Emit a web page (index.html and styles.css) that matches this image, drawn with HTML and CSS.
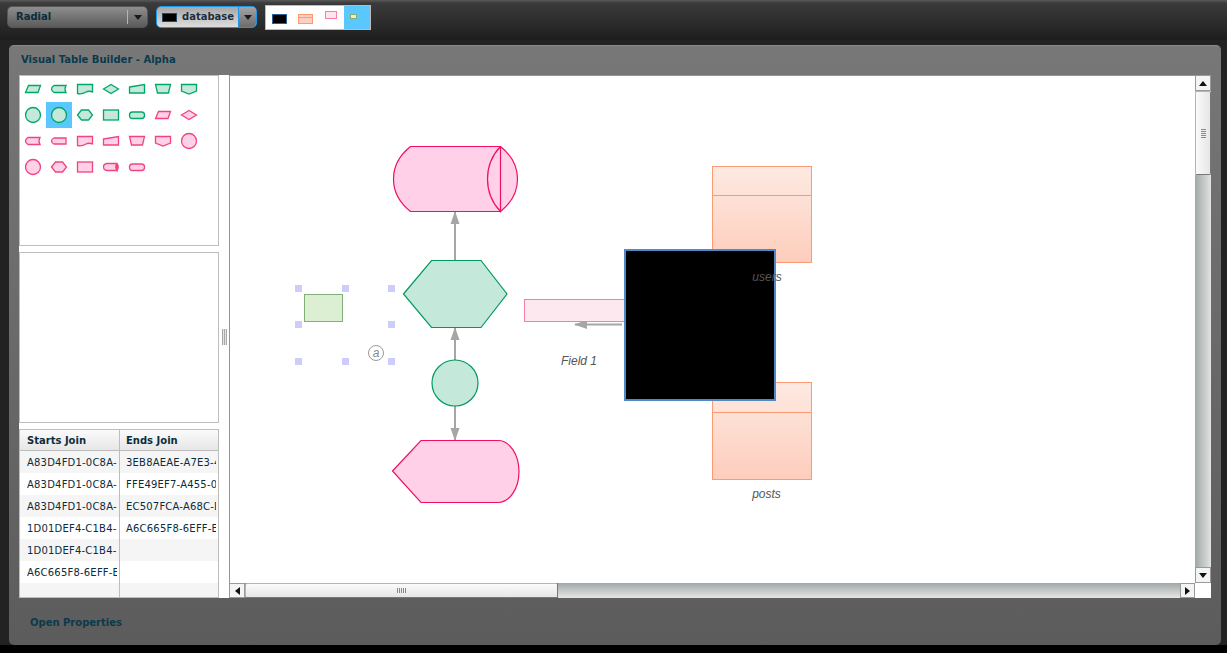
FILE: index.html
```html
<!DOCTYPE html>
<html lang="en">
<head>
<meta charset="utf-8">
<title>Visual Table Builder - Alpha</title>
<link rel="stylesheet" href="styles.css">
</head>
<body>
<svg class="sprite" aria-hidden="true">
  <defs>
    <path id="i-para" d="M8.5,9.500H20.500L18,16.500H5.500Z"/>
    <path id="i-card" d="M8,9.500H20Q18,13 20,16.500H8Q5.500,15 5.500,13Q5.500,11 8,9.500Z"/>
    <path id="i-doc" d="M5.500,8.500H20.500V16Q17,14.500 14,16Q10,18.500 5.500,17.500Z"/>
    <path id="i-diamond" d="M5.500,13L13,8.500L20.500,13L13,17.500Z"/>
    <path id="i-input" d="M5.500,11L20.500,8.500V17H5.500Z"/>
    <path id="i-trap" d="M5.500,8.500H20.500L18.500,17H7.500Z"/>
    <path id="i-off" d="M5.500,8.500H20.500V15L13,18L5.500,15Z"/>
    <circle id="i-circle" cx="13" cy="13" r="7.500"/>
    <path id="i-hex" d="M5.500,13L9.500,8H16.500L20.500,13L16.500,18H9.500Z"/>
    <rect id="i-rect" x="5.500" y="8" width="15" height="10"/>
    <rect id="i-pill" x="5.500" y="10" width="15" height="6.500" rx="3"/>
    <path id="i-tag" d="M8,10H20V16H8Q5.500,15 5.500,13Q5.500,11 8,10Z"/>
    <path id="i-cyl" d="M9,9.500H19Q21.500,13 19,16.500H9Q5.500,16 5.500,13Q5.500,10 9,9.500ZM19,9.500Q16.500,13 19,16.500V9.500"/>
  </defs>
</svg>

<header class="topbar">
  <div class="combo combo-plain">
    <span class="combo-label">Radial</span>
    <span class="combo-btn"><i class="caret"></i></span>
  </div>
  <div class="combo combo-active">
    <span class="combo-swatch"></span>
    <span class="combo-label">database</span>
    <span class="combo-btn"><i class="caret"></i></span>
  </div>
  <svg class="strip" width="106" height="25" viewBox="0 0 106 25">
    <rect width="106" height="25" fill="#fff"/>
    <rect x="79" width="27" height="25" fill="#5ac8ff"/>
    <rect x="7.500" y="9.500" width="14" height="9" fill="#000" stroke="#2c5f92"/>
    <rect x="33.500" y="9.500" width="14" height="9" fill="#ffd0bf" stroke="#fd9a74"/>
    <path d="M33.500,12.500H47.500" stroke="#fd9a74" fill="none"/>
    <rect x="60.500" y="6.500" width="11" height="7" fill="#ffe3ef" stroke="#f580a5"/>
    <rect x="85.500" y="9.500" width="6" height="4" fill="#e8f0c8" stroke="#82ae78"/>
  </svg>
</header>

<main class="panel">
  <h1 class="panel-title">Visual Table Builder - Alpha</h1>
  <div class="workspace">
    <aside class="sidebar">
      <div class="box palette">
        <svg class="ico green"><use href="#i-para"/></svg>
        <svg class="ico green"><use href="#i-card"/></svg>
        <svg class="ico green"><use href="#i-doc"/></svg>
        <svg class="ico green"><use href="#i-diamond"/></svg>
        <svg class="ico green"><use href="#i-input"/></svg>
        <svg class="ico green"><use href="#i-trap"/></svg>
        <svg class="ico green"><use href="#i-off"/></svg>

        <svg class="ico green"><use href="#i-circle"/></svg>
        <svg class="ico green selected"><use href="#i-circle"/></svg>
        <svg class="ico green"><use href="#i-hex"/></svg>
        <svg class="ico green"><use href="#i-rect"/></svg>
        <svg class="ico green"><use href="#i-pill"/></svg>
        <svg class="ico pink"><use href="#i-para"/></svg>
        <svg class="ico pink"><use href="#i-diamond"/></svg>

        <svg class="ico pink"><use href="#i-card"/></svg>
        <svg class="ico pink"><use href="#i-tag"/></svg>
        <svg class="ico pink"><use href="#i-doc"/></svg>
        <svg class="ico pink"><use href="#i-input"/></svg>
        <svg class="ico pink"><use href="#i-trap"/></svg>
        <svg class="ico pink"><use href="#i-off"/></svg>
        <svg class="ico pink"><use href="#i-circle"/></svg>

        <svg class="ico pink"><use href="#i-circle"/></svg>
        <svg class="ico pink"><use href="#i-hex"/></svg>
        <svg class="ico pink"><use href="#i-rect"/></svg>
        <svg class="ico pink"><use href="#i-cyl"/></svg>
        <svg class="ico pink"><use href="#i-pill"/></svg>
      </div>
      <div class="box blank"></div>
      <table class="joins">
        <thead>
          <tr><th>Starts Join</th><th>Ends Join</th></tr>
        </thead>
        <tbody>
          <tr><td><div>A83D4FD1-0C8A-4B12-9</div></td><td><div>3EB8AEAE-A7E3-4C19-A</div></td></tr>
          <tr><td><div>A83D4FD1-0C8A-4B12-9</div></td><td><div>FFE49EF7-A455-0D21-8</div></td></tr>
          <tr><td><div>A83D4FD1-0C8A-4B12-9</div></td><td><div>EC507FCA-A68C-D102-4</div></td></tr>
          <tr><td><div>1D01DEF4-C1B4-3A17-5</div></td><td><div>A6C665F8-6EFF-E201-7</div></td></tr>
          <tr><td><div>1D01DEF4-C1B4-3A17-5</div></td><td><div></div></td></tr>
          <tr><td><div>A6C665F8-6EFF-E201-7</div></td><td><div></div></td></tr>
          <tr class="filler"><td><div></div></td><td><div></div></td></tr>
        </tbody>
      </table>
    </aside>

    <div class="splitter"><i></i></div>

    <section class="stage">
      <div class="canvas">
        <svg class="diagram" width="965" height="507" viewBox="230 76 965 507">
          <defs>
            <linearGradient id="orange" x1="0" y1="0" x2="0" y2="1">
              <stop offset="0" stop-color="#fdeae2"/>
              <stop offset="1" stop-color="#fdcdbc"/>
            </linearGradient>
            <marker id="head" markerWidth="14" markerHeight="10" refX="12" refY="5" orient="auto" markerUnits="userSpaceOnUse">
              <path d="M0,0.500L13,5L0,9.500Z" fill="#a6a6a6"/>
            </marker>
          </defs>

          <g class="link">
            <path d="M455,260V212" marker-end="url(#head)"/>
            <path d="M455,360V328" marker-end="url(#head)"/>
            <path d="M455,406V440" marker-end="url(#head)"/>
            <path d="M622,324.500H575" marker-end="url(#head)"/>
          </g>

          <path class="pinkshape" d="M410.500,146.500H500.500Q517.500,160 517.500,179Q517.500,198 500.500,211.500H410.500Q393.500,198 393.500,179Q393.500,160 410.500,146.500Z"/>
          <path class="pinkshape nofill" d="M500.500,146.500Q487.500,160 487.500,179Q487.500,198 500.500,211.500V146.500"/>
          <path class="greenshape" d="M403.500,294L431.500,260.500H481L507,294L481,327.500H431.500Z"/>
          <circle class="greenshape" cx="455" cy="383" r="23"/>
          <path class="pinkshape" d="M392.500,471L421,440.500H498A21,31 0 0 1 498,502.500H421Z"/>

          <rect class="selrect" x="304.500" y="294.500" width="38" height="27"/>
          <g class="handles">
            <rect x="295" y="285" width="7" height="7"/>
            <rect x="342" y="285" width="7" height="7"/>
            <rect x="388" y="285" width="7" height="7"/>
            <rect x="295" y="321" width="7" height="7"/>
            <rect x="388" y="321" width="7" height="7"/>
            <rect x="295" y="358" width="7" height="7"/>
            <rect x="342" y="358" width="7" height="7"/>
            <rect x="388" y="358" width="7" height="7"/>
          </g>
          <circle class="atring" cx="376" cy="353" r="7.500"/>
          <text class="at" x="376" y="356.500">a</text>

          <rect class="field" x="524.500" y="299.500" width="101" height="22"/>
          <text class="label" x="579" y="365">Field 1</text>

          <rect class="tbl" x="712.500" y="166.500" width="99" height="96"/>
          <path class="tblline" d="M712,195.500H812"/>
          <rect class="tbl" x="712.500" y="382.500" width="99" height="97"/>
          <path class="tblline" d="M712,412.500H812"/>

          <rect class="blackbox" x="625" y="250" width="150" height="150"/>

          <text class="label" x="767" y="281">users</text>
          <text class="label" x="766.500" y="498">posts</text>
        </svg>
      </div>
      <div class="vscroll">
        <span class="sbtn"><i class="tri up"></i></span>
        <span class="vthumb"><i class="grip-h"></i></span>
        <span class="vtrack"></span>
        <span class="sbtn"><i class="tri down"></i></span>
      </div>
      <div class="hscroll">
        <span class="sbtn sbtn-first"><i class="tri left"></i></span>
        <span class="hthumb"><i class="grip-v"></i></span>
        <span class="htrack"></span>
        <span class="sbtn"><i class="tri right"></i></span>
      </div>
      <div class="corner"></div>
    </section>
  </div>
  <div class="panel-foot">Open Properties</div>
</main>
</body>
</html>
```

FILE: styles.css
```css
* { box-sizing: border-box; }
html, body { margin: 0; height: 100%; }
body {
  width: 1227px;
  height: 653px;
  overflow: hidden;
  background: linear-gradient(#222 645px, #000 645px);
  font-family: "DejaVu Sans", Verdana, sans-serif;
  font-size: 10px;
  color: #0b3040;
  display: flex;
  flex-direction: column;
}
.sprite { width: 0; height: 0; position: absolute; }

.topbar {
  height: 40px;
  flex: none;
  display: flex;
  align-items: flex-start;
  padding: 5px 0 0 7px;
  background: linear-gradient(#5a5a5a 0, #3b3b3b 3px, #262626 30px, #1d1d1d 100%);
}
.combo {
  height: 22px;
  margin-top: 1px;
  display: flex;
  align-items: center;
  border-radius: 5px;
  font-weight: bold;
  color: #0c2c3c;
  overflow: hidden;
}
.combo-label { margin-top: -2px; }
.combo-plain {
  width: 141px;
  background: linear-gradient(#8e8e8e, #5a5a5a);
  border: 1px solid #555;
  padding-left: 8px;
}
.combo-plain .combo-label { flex: 1; }
.combo-plain .combo-btn {
  width: 20px;
  height: 14px;
  border-left: 1px solid #b5b5b5;
}
.combo-active {
  width: 101px;
  margin-left: 8px;
  border: 1px solid #1e97e8;
  background: linear-gradient(#a6a6a6, #dedede);
  padding-left: 4px;
  color: #1c2e3c;
}
.combo-swatch {
  width: 15px;
  height: 9px;
  margin-left: 1px;
  margin-right: 5px;
  background: #000;
  border: 1px solid #21476c;
  flex: none;
}
.combo-active .combo-label { flex: 1; }
.combo-active .combo-btn {
  width: 18px;
  height: 100%;
  border-left: 1px solid #1e97e8;
  background: linear-gradient(#a4a4a4, #6c6c6c);
}
.combo-btn {
  flex: none;
  display: flex;
  align-items: center;
  justify-content: center;
}
.caret {
  width: 0;
  height: 0;
  border-left: 4px solid transparent;
  border-right: 4px solid transparent;
  border-top: 5px solid #1a1a1a;
}
.strip { margin-left: 8px; display: block; outline: 1px solid #bbb; outline-offset: -1px; }

.panel {
  margin: 5px 6px 8px 9px;
  flex: 1;
  min-height: 0;
  display: flex;
  flex-direction: column;
  border-radius: 5px;
  border-top: 1px solid #8a8a8a;
  background: linear-gradient(#787878 0, #747474 60px, #5c5c5c 100%);
}
.panel-title {
  margin: 0;
  height: 29px;
  flex: none;
  padding: 7px 0 0 12px;
  font-size: 10px;
  line-height: 13px;
  font-weight: bold;
  color: #0a3a4c;
}
.workspace { display: flex; margin-left: 10px; flex: none; height: 523px; }
.sidebar { width: 200px; flex: none; display: flex; flex-direction: column; background: #fff; }
.box {
  width: 200px;
  height: 171px;
  flex: none;
  background: #fff;
  border: 1px solid #bdbdbd;
}
.blank { margin-top: 6px; }
.palette {
  display: grid;
  grid-template-columns: repeat(7, 26px);
  grid-auto-rows: 26px;
  align-content: start;
}
.ico { width: 26px; height: 26px; display: block; stroke-width: 1.3; }
.green { fill: #c4e8da; stroke: #00a868; }
.pink { fill: #ffd0e8; stroke: #f0447f; }
.selected { background: #5ac8ff; }

.joins {
  width: 200px;
  margin-top: 6px;
  flex: none;
  border-collapse: separate;
  border-spacing: 0;
  table-layout: fixed;
  background: #fff;
  border: 1px solid #bdbdbd;
}
.joins th {
  height: 21px;
  padding: 0 0 0 7px;
  text-align: left;
  font-size: 10px;
  font-weight: bold;
  color: #0c2c3c;
  background: linear-gradient(#fbfbfb, #e6e6e6);
  border-bottom: 1px solid #bdbdbd;
}
.joins th:first-child { width: 100px; }
.joins th:last-child { padding-left: 6px; }
.joins th:first-child, .joins td:first-child { border-right: 1px solid #bdbdbd; }
.joins td { height: 22px; padding: 0; font-size: 10px; color: #0c2c3c; }
.joins td div { overflow: hidden; white-space: nowrap; padding-left: 7px; margin-right: 2px; letter-spacing: 0.2px; }
.joins td:last-child div { padding-left: 6px; }
.joins tbody tr:nth-child(odd) { background: #f5f5f5; }
.joins .filler td { height: 14px; }

.splitter {
  width: 10px;
  flex: none;
  display: flex;
  align-items: center;
  justify-content: center;
  background: #fff;
}
.splitter i {
  width: 5px;
  height: 16px;
  background: repeating-linear-gradient(90deg, #a8a8a8 0 1px, #e4e4e4 1px 2px);
}

.stage {
  width: 982px;
  height: 523px;
  flex: none;
  display: grid;
  grid-template-columns: 966px 16px;
  grid-template-rows: 508px 15px;
}
.canvas { background: #fff; border-top: 1px solid #8b94a8; border-left: 1px solid #8b94a8; overflow: hidden; position: relative; }
.diagram { display: block; position: absolute; left: 0; top: 0; }

.link path { stroke: #a6a6a6; stroke-width: 2; fill: none; }
.pinkshape { fill: #ffd0e8; stroke: #f00f60; stroke-width: 1.2; }
.nofill { fill: none; }
.greenshape { fill: #c4e8da; stroke: #009a5c; stroke-width: 1.2; }
.selrect { fill: #dcefd2; stroke: #82ae78; stroke-width: 1; }
.handles rect { fill: #cdcdfb; }
.atring { fill: #fff; stroke: #999; stroke-width: 1; }
.at { font-family: "Liberation Sans", Arial, sans-serif; font-style: italic; font-size: 12px; fill: #888; text-anchor: middle; }
.field { fill: #fde8f0; stroke: #f580a5; stroke-width: 1; }
.tbl { fill: url(#orange); stroke: #fd9a74; stroke-width: 1; }
.tblline { stroke: #fd9a74; stroke-width: 1; fill: none; }
.blackbox { fill: #000; stroke: #5089c8; stroke-width: 2; }
.label { font-family: "Liberation Sans", Arial, sans-serif; font-style: italic; font-size: 12px; fill: #555; text-anchor: middle; }

.vscroll {
  display: flex;
  flex-direction: column;
  background: #e6e6e6;
}
.hscroll { display: flex; }
.sbtn {
  width: 16px;
  height: 16px;
  flex: none;
  display: flex;
  align-items: center;
  justify-content: center;
  background: #f4f4f4;
  border: 1px solid #999;
}
.hscroll .sbtn { height: 15px; width: 15px; }
.hscroll .sbtn-first { width: 16px; }
.vthumb {
  height: 84px;
  flex: none;
  display: flex;
  align-items: center;
  justify-content: center;
  background: linear-gradient(90deg, #fafafa, #e6e6e6);
  border: 1px solid #b4b4b4;
  border-right-color: #777;
  border-bottom-color: #777;
  border-radius: 2px;
}
.vtrack { flex: 1; background: linear-gradient(90deg, #a0a8a8, #e2e2e2); }
.htrack { flex: 1; background: linear-gradient(#a0a8a8, #e6e6e6); }
.hthumb {
  width: 313px;
  flex: none;
  display: flex;
  align-items: center;
  justify-content: center;
  background: linear-gradient(#fafafa, #e6e6e6);
  border: 1px solid #b4b4b4;
  border-bottom-color: #777;
  border-right-color: #777;
  border-radius: 2px;
}
.grip-h {
  width: 5px;
  height: 9px;
  background: repeating-linear-gradient(#888 0 1px, transparent 1px 2px);
}
.grip-v {
  width: 9px;
  height: 5px;
  background: repeating-linear-gradient(90deg, #888 0 1px, transparent 1px 2px);
}
.corner { background: #fff; }
.tri { width: 0; height: 0; border-style: solid; border-color: transparent; }
.tri.up { border-width: 0 4px 5px; border-bottom-color: #111; }
.tri.down { border-width: 5px 4px 0; border-top-color: #111; }
.tri.left { border-width: 4px 5px 4px 0; border-right-color: #111; }
.tri.right { border-width: 4px 0 4px 5px; border-left-color: #111; }

.panel-foot {
  padding: 18px 0 0 21px;
  font-size: 10px;
  line-height: 13px;
  font-weight: bold;
  color: #0a3a4c;
}
```
